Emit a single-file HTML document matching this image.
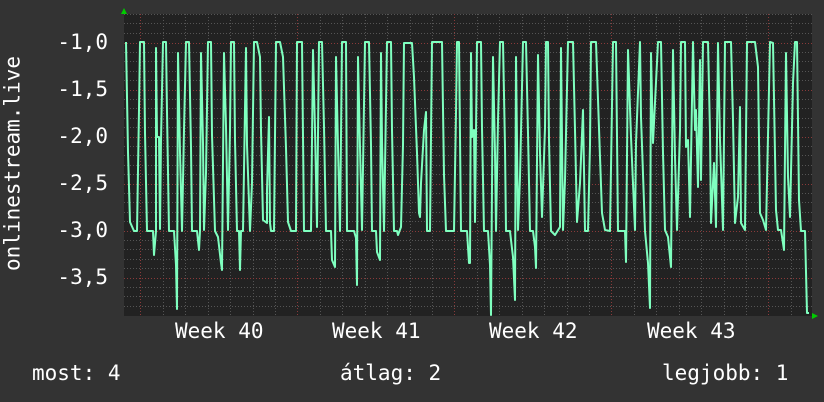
<!DOCTYPE html>
<html><head><style>
html,body{margin:0;padding:0;background:#333;}
body{width:824px;height:402px;overflow:hidden;position:relative;font-family:"DejaVu Sans Mono","Liberation Mono",monospace;color:#fff;}
.t{position:absolute;font-size:21px;white-space:pre;line-height:1;}
.yl{right:716px;}
</style></head><body>
<svg width="824" height="402" style="position:absolute;left:0;top:0">
<rect x="124" y="14" width="688" height="302" fill="#222"/>
<g stroke="#555" stroke-width="1" stroke-dasharray="1,2">
<path d="M124,14.5H812M124,23.5H812M124,33.5H812M124,52.5H812M124,61.5H812M124,71.5H812M124,80.5H812M124,99.5H812M124,108.5H812M124,118.5H812M124,127.5H812M124,146.5H812M124,155.5H812M124,165.5H812M124,174.5H812M124,193.5H812M124,202.5H812M124,212.5H812M124,221.5H812M124,240.5H812M124,249.5H812M124,259.5H812M124,268.5H812M124,287.5H812M124,296.5H812M124,306.5H812"/>
<path d="M163.5,14V316M185.5,14V316M208.5,14V316M230.5,14V316M253.5,14V316M275.5,14V316M320.5,14V316M342.5,14V316M365.5,14V316M387.5,14V316M410.5,14V316M432.5,14V316M477.5,14V316M499.5,14V316M522.5,14V316M544.5,14V316M567.5,14V316M589.5,14V316M634.5,14V316M656.5,14V316M679.5,14V316M701.5,14V316M724.5,14V316M746.5,14V316M791.5,14V316"/>
</g>
<g stroke="#8a3a3a" stroke-width="1" stroke-dasharray="1,2">
<path d="M124,43.5H812M124,90.5H812M124,137.5H812M124,184.5H812M124,231.5H812M124,278.5H812"/>
<path d="M140.5,14V316M297.5,14V316M454.5,14V316M611.5,14V316M768.5,14V316"/>
</g>
<polyline fill="none" stroke="#7fffbf" stroke-width="2" stroke-linejoin="round" points="126,42 128,152 130,222 134,231 137,231 139,110 140,42 144,42 145,133 147,231 153,231 154,255 156,231 156,48 157,137 159,137 160,229 161,140 163,42 166,42 167,112 169,231 174,231 176,265 177,309 178,53 180,152 182,231 184,130 186,42 189,42 191,147 192,231 197,231 199,250 200,231 201,53 203,143 204,230 206,173 208,42 211,42 212,135 215,231 218,237 221,263 222,270 224,53 226,127 228,230 230,130 231,42 234,42 235,140 237,231 239,231 240,270 241,231 243,231 246,48 247,145 250,231 252,183 254,42 257,42 260,57 261,130 263,220 267,223 267,190 269,117 270,223 271,231 274,231 276,42 280,42 283,57 286,148 288,222 291,231 296,231 297,42 302,42 304,231 311,231 313,50 315,130 317,227 319,42 322,42 324,127 326,231 331,231 332,260 335,267 336,57 338,147 340,231 342,42 346,42 347,231 354,231 356,238 357,285 358,57 360,147 362,230 365,42 369,42 371,145 372,231 376,231 377,252 380,260 381,53 382,140 384,231 387,42 391,42 392,130 394,231 397,231 398,235 401,227 403,145 404,43 412,43 414,77 417,153 419,213 420,217 421,183 424,130 426,112 427,231 430,231 432,42 442,42 444,175 446,231 454,231 456,113 457,42 459,42 461,231 467,231 469,263 470,263 471,53 472,137 474,130 475,222 477,42 481,42 482,128 484,231 488,231 490,265 491,315 493,57 495,153 496,231 498,120 500,42 503,42 505,147 506,231 510,231 511,240 513,257 515,300 516,57 518,230 520,177 523,42 526,42 528,133 530,231 533,231 535,247 536,268 538,55 540,153 542,217 545,128 546,42 548,42 549,140 551,231 555,235 560,227 561,48 563,230 565,180 568,42 573,42 575,130 577,222 580,183 583,110 585,231 588,231 590,145 591,42 596,42 600,157 602,213 605,230 610,231 613,42 616,42 618,231 625,231 626,262 628,50 631,137 635,230 636,143 640,42 641,117 645,231 648,263 650,308 651,53 653,143 658,42 661,42 663,153 665,230 668,237 671,267 673,50 675,157 677,230 680,130 681,42 685,42 686,147 688,140 690,217 693,42 695,130 696,110 698,187 700,60 701,180 703,42 708,42 710,133 711,223 714,163 716,227 718,43 720,140 723,230 725,42 731,42 733,120 735,223 738,197 740,107 741,223 745,230 747,42 755,42 758,67 760,213 763,220 766,230 770,42 773,43 776,210 778,230 781,230 784,250 786,53 788,177 790,217 793,83 795,42 797,42 799,200 801,231 805,231 807,313 809,313"/>
<path d="M121,14L127,14L124,8Z" fill="#0c0"/>
<path d="M812,313L812,319L818,316Z" fill="#0c0"/>
</svg>
<div class="t yl" style="top:32px">-1,0</div>
<div class="t yl" style="top:79px">-1,5</div>
<div class="t yl" style="top:126px">-2,0</div>
<div class="t yl" style="top:173px">-2,5</div>
<div class="t yl" style="top:220px">-3,0</div>
<div class="t yl" style="top:267px">-3,5</div>
<div class="t" style="left:-107px;top:153px;width:240px;text-align:center;transform:rotate(-90deg);">onlinestream.live</div>
<div class="t" style="left:175px;top:321px">Week 40</div>
<div class="t" style="left:332px;top:321px">Week 41</div>
<div class="t" style="left:489px;top:321px">Week 42</div>
<div class="t" style="left:647px;top:321px">Week 43</div>
<div class="t" style="left:32px;top:363px">most: 4</div>
<div class="t" style="left:340px;top:363px">átlag: 2</div>
<div class="t" style="left:662px;top:363px">legjobb: 1</div>
</body></html>
